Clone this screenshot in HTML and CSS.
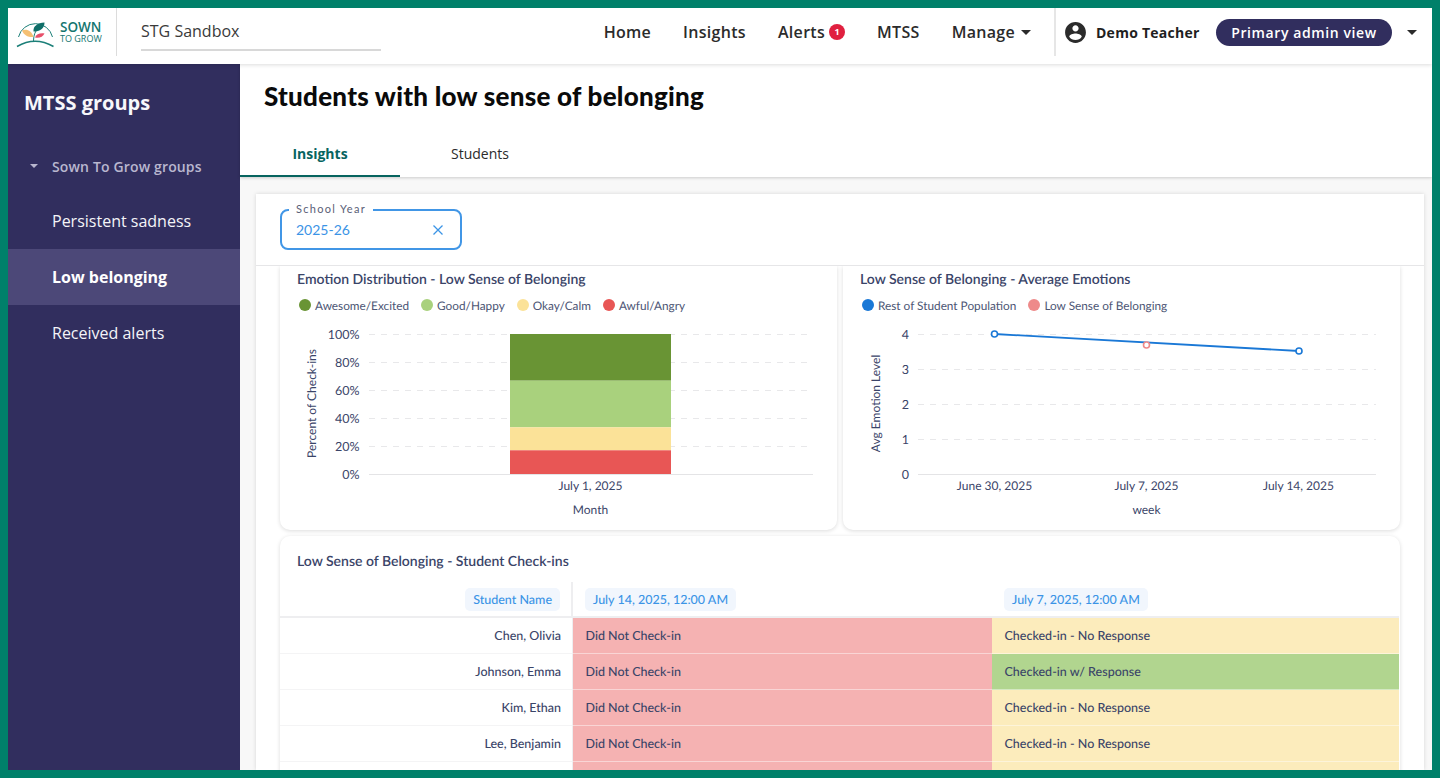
FILE: index.html
```html
<!DOCTYPE html>
<html lang="en">
<head>
<meta charset="utf-8">
<title>Students with low sense of belonging</title>
<link rel="stylesheet" href="styles.css">
</head>
<body>
<div class="frame">
  <header class="topbar">
    <div class="brand">
      <svg class="brand-mark" width="40" height="32" viewBox="0 0 40 32" aria-hidden="true">
        <path d="M2.500 21A17.500 17.500 0 0 1 36.500 21" fill="none" stroke="#1b7f78" stroke-width="1"/>
        <path d="M1 30.500Q19 20 37.500 30.500" fill="none" stroke="#1b7f78" stroke-width="1.500"/>
        <path d="M17.500 26C17.500 22 18 18 20 15" fill="none" stroke="#1b7f78" stroke-width="1"/>
        <path d="M17.500 15.500C17 10 21.500 7 28.500 6.500C28.500 12 24 16 17.500 15.500Z" fill="#0e6e68"/>
        <path d="M6 14.500C10.500 12.500 15.500 14.500 17.500 21C12.500 21.500 8 19.500 6 14.500Z" fill="#f5c073"/>
        <path d="M19 21.500C20.500 18 24 16.800 28.500 17.500C27 21 23 22.500 19 21.500Z" fill="#e8506a"/>
      </svg>
      <div class="brand-text">
        <span class="brand-top">SOWN</span>
        <span class="brand-bottom">TO GROW</span>
      </div>
    </div>
    <div class="sandbox">STG Sandbox</div>
    <nav class="nav">
      <a class="nav-item">Home</a>
      <a class="nav-item">Insights</a>
      <a class="nav-item">Alerts<span class="badge">1</span></a>
      <a class="nav-item">MTSS</a>
      <a class="nav-item">Manage<span class="caret caret-nav"></span></a>
    </nav>
    <div class="account">
      <svg class="avatar" width="25" height="25" viewBox="0 0 24 24" aria-hidden="true"><path fill="#2b2b2b" d="M12 2C6.480 2 2 6.480 2 12s4.480 10 10 10 10-4.480 10-10S17.520 2 12 2zm0 3c1.660 0 3 1.340 3 3s-1.340 3-3 3-3-1.340-3-3 1.340-3 3-3zm0 14.200c-2.500 0-4.710-1.280-6-3.220.030-1.990 4-3.080 6-3.080 1.990 0 5.970 1.090 6 3.080-1.290 1.940-3.500 3.220-6 3.220z"/></svg>
      <span class="account-name">Demo Teacher</span>
      <span class="role-pill">Primary admin view</span>
      <span class="caret caret-account"></span>
    </div>
  </header>

  <div class="body-row">
    <aside class="sidebar">
      <h2 class="side-title">MTSS groups</h2>
      <div class="side-group"><span class="caret caret-side"></span>Sown To Grow groups</div>
      <a class="side-item">Persistent sadness</a>
      <a class="side-item side-item-active">Low belonging</a>
      <a class="side-item">Received alerts</a>
    </aside>

    <main class="main">
      <div class="page-head">
        <h1 class="page-title">Students with low sense of belonging</h1>
        <div class="tabs">
          <a class="tab tab-active">Insights</a>
          <a class="tab">Students</a>
        </div>
      </div>

      <div class="content">
        <section class="panel">
          <div class="filters">
            <div class="field">
              <span class="field-label">School Year</span>
              <span class="field-value">2025-26</span>
              <svg width="12" height="12" viewBox="0 0 12 12" aria-hidden="true"><path d="M1.500 1.500l9 9M10.500 1.500l-9 9" stroke="#3b94e6" stroke-width="1.300" fill="none"/></svg>
            </div>
          </div>
          <div class="panel-body">
            <div class="chart-row">
              <article class="card chart-card">
                <h3 class="card-title">Emotion Distribution - Low Sense of Belonging</h3>
                <div class="legend">
                  <span class="legend-item"><i class="dot dot-awesome"></i>Awesome/Excited</span>
                  <span class="legend-item"><i class="dot dot-good"></i>Good/Happy</span>
                  <span class="legend-item"><i class="dot dot-okay"></i>Okay/Calm</span>
                  <span class="legend-item"><i class="dot dot-awful"></i>Awful/Angry</span>
                </div>
                <svg class="chart" width="557" height="200" viewBox="280 320 557 200">
                  <g class="grid">
                    <line x1="369" x2="813" y1="334.500" y2="334.500"/>
                    <line x1="369" x2="813" y1="362.500" y2="362.500"/>
                    <line x1="369" x2="813" y1="390.500" y2="390.500"/>
                    <line x1="369" x2="813" y1="418.500" y2="418.500"/>
                    <line x1="369" x2="813" y1="446.500" y2="446.500"/>
                  </g>
                  <line class="axis" x1="369" x2="813" y1="474.500" y2="474.500"/>
                  <rect x="510" y="334" width="161" height="46.700" fill="#699434"/>
                  <rect x="510" y="380.700" width="161" height="46.600" fill="#a9d17d"/>
                  <rect x="510" y="427.300" width="161" height="23" fill="#fbe298"/>
                  <rect x="510" y="450.300" width="161" height="23.700" fill="#e85655"/>
                  <g class="tick tick-y">
                    <text x="359.500" y="339">100%</text>
                    <text x="359.500" y="367">80%</text>
                    <text x="359.500" y="395">60%</text>
                    <text x="359.500" y="423">40%</text>
                    <text x="359.500" y="451">20%</text>
                    <text x="359.500" y="479">0%</text>
                  </g>
                  <text class="tick tick-x" x="590.500" y="489.500">July 1, 2025</text>
                  <text class="tick tick-x" x="590.500" y="513.500">Month</text>
                  <text class="tick tick-x" transform="translate(315.500 403.500) rotate(-90)">Percent of Check-ins</text>
                </svg>
              </article>

              <article class="card chart-card">
                <h3 class="card-title">Low Sense of Belonging - Average Emotions</h3>
                <div class="legend">
                  <span class="legend-item"><i class="dot dot-rest"></i>Rest of Student Population</span>
                  <span class="legend-item"><i class="dot dot-low"></i>Low Sense of Belonging</span>
                </div>
                <svg class="chart" width="557" height="200" viewBox="843 320 557 200">
                  <g class="grid">
                    <line x1="918" x2="1376" y1="334.500" y2="334.500"/>
                    <line x1="918" x2="1376" y1="369.500" y2="369.500"/>
                    <line x1="918" x2="1376" y1="404.500" y2="404.500"/>
                    <line x1="918" x2="1376" y1="439.500" y2="439.500"/>
                  </g>
                  <line class="axis" x1="918" x2="1376" y1="474.500" y2="474.500"/>
                  <polyline points="994.500,334 1299,351" fill="none" stroke="#1a78d6" stroke-width="1.800"/>
                  <circle cx="994.500" cy="334" r="3" fill="#fff" stroke="#1a78d6" stroke-width="1.600"/>
                  <circle cx="1146.500" cy="345" r="3" fill="#fff" stroke="#ee8a8a" stroke-width="1.600"/>
                  <circle cx="1299" cy="351" r="3" fill="#fff" stroke="#1a78d6" stroke-width="1.600"/>
                  <g class="tick tick-y">
                    <text x="909" y="339">4</text>
                    <text x="909" y="374">3</text>
                    <text x="909" y="409">2</text>
                    <text x="909" y="444">1</text>
                    <text x="909" y="479">0</text>
                  </g>
                  <text class="tick tick-x" x="994.500" y="489.500">June 30, 2025</text>
                  <text class="tick tick-x" x="1146.500" y="489.500">July 7, 2025</text>
                  <text class="tick tick-x" x="1298.500" y="489.500">July 14, 2025</text>
                  <text class="tick tick-x" x="1146.500" y="513.500">week</text>
                  <text class="tick tick-x" transform="translate(879.500 403.500) rotate(-90)">Avg Emotion Level</text>
                </svg>
              </article>
            </div>

            <article class="card table-card">
              <h3 class="table-title">Low Sense of Belonging - Student Check-ins</h3>
              <div class="table">
                <div class="th th-name"><span class="chip">Student Name</span></div>
                <div class="th"><span class="chip">July 14, 2025, 12:00 AM</span></div>
                <div class="th"><span class="chip">July 7, 2025, 12:00 AM</span></div>

                <div class="td td-name">Chen, Olivia</div>
                <div class="td st-none">Did Not Check-in</div>
                <div class="td st-partial">Checked-in - No Response</div>

                <div class="td td-name">Johnson, Emma</div>
                <div class="td st-none">Did Not Check-in</div>
                <div class="td st-full">Checked-in w/ Response</div>

                <div class="td td-name">Kim, Ethan</div>
                <div class="td st-none">Did Not Check-in</div>
                <div class="td st-partial">Checked-in - No Response</div>

                <div class="td td-name">Lee, Benjamin</div>
                <div class="td st-none">Did Not Check-in</div>
                <div class="td st-partial">Checked-in - No Response</div>

                <div class="td td-name"></div>
                <div class="td st-none"></div>
                <div class="td st-partial"></div>
              </div>
            </article>
          </div>
        </section>
      </div>
    </main>
  </div>
</div>
</body>
</html>
```
FILE: styles.css
```css
* { box-sizing: border-box; }
html, body { margin: 0; height: 100%; }
body {
  height: 778px;
  overflow: hidden;
  padding: 8px;
  background: #00806a;
  font-family: "Open Sans", "Liberation Sans", sans-serif;
  color: #2b2b2b;
}
h1, h2, h3 { margin: 0; }

.frame {
  height: 762px;
  display: flex;
  flex-direction: column;
  overflow: hidden;
  background: #fff;
}

/* Top bar */
.topbar {
  flex: 0 0 56px;
  display: flex;
  align-items: flex-start;
  background: #fff;
  box-shadow: 0 1px 4px rgba(0,0,0,.14);
  position: relative;
  z-index: 2;
}
.brand {
  width: 109px;
  height: 48px;
  flex: none;
  display: flex;
  align-items: center;
  gap: 4px;
  padding-left: 8px;
  border-right: 1px solid #dcdcdc;
}
.brand-mark { flex: none; }
.brand-text { display: flex; flex-direction: column; color: #14756f; }
.brand-top { font-size: 13.500px; font-weight: 600; line-height: 13px; }
.brand-bottom { font-size: 9px; line-height: 10px; }
.sandbox {
  width: 240px;
  height: 43px;
  margin-left: 24px;
  padding-top: 10px;
  flex: none;
  font-size: 16px;
  line-height: 26px;
  color: #3a3a3a;
  border-bottom: 2px solid #d8d8d8;
}
.nav {
  margin-left: auto;
  height: 48px;
  display: flex;
  align-items: center;
  gap: 32px;
  padding-right: 23px;
}
.nav-item {
  display: flex;
  align-items: center;
  font-size: 16px;
  font-weight: 600;
  letter-spacing: .3px;
  color: #2b2b2b;
}
.badge {
  width: 16px;
  height: 16px;
  margin-left: 4px;
  border-radius: 50%;
  background: #e0203f;
  color: #fff;
  font-size: 9px;
  font-weight: 700;
  line-height: 16px;
  text-align: center;
  letter-spacing: 0;
}
.caret {
  display: inline-block;
  width: 0;
  height: 0;
  border-left: 5px solid transparent;
  border-right: 5px solid transparent;
  border-top: 5px solid #2b2b2b;
}
.caret-nav { margin-left: 6px; }
.account {
  height: 48px;
  width: 378px;
  flex: none;
  display: flex;
  align-items: center;
  border-left: 2px solid #e6e6e6;
  padding-left: 7px;
}
.account-name { margin-left: 8px; width: 103px; white-space: nowrap; font-size: 14px; font-weight: 700; color: #1f1f1f; letter-spacing: .25px; }
.role-pill {
  margin-left: 17px;
  width: 176px;
  height: 27px;
  flex: none;
  border-radius: 14px;
  background: #312e5e;
  color: #fff;
  font-size: 14px;
  font-weight: 600;
  line-height: 27px;
  text-align: center;
  letter-spacing: .6px;
}
.caret-account { margin-left: 15px; }

/* Body */
.body-row { flex: 1; min-height: 0; display: flex; }
.sidebar {
  flex: 0 0 232px;
  background: #312e5e;
  color: #fff;
}
.side-title {
  padding: 25px 16px 0;
  font-size: 20px;
  font-weight: 700;
  line-height: 27px;
  color: #f7f7fb;
}
.side-group {
  display: flex;
  align-items: center;
  margin-top: 39px;
  padding-left: 22px;
  height: 22px;
  font-size: 14px;
  font-weight: 600;
  letter-spacing: .15px;
  color: #b9b7cf;
}
.caret-side {
  margin-right: 14px;
  border-left-width: 4px;
  border-right-width: 4px;
  border-top: 4px solid #b9b7cf;
}
.side-item {
  display: block;
  height: 56px;
  padding-left: 44px;
  font-size: 16px;
  line-height: 56px;
  color: #f4f4f8;
}
.side-group + .side-item { margin-top: 16px; }
.side-item-active { background: #4c4878; font-weight: 700; color: #fff; }

.main { flex: 1; min-width: 0; display: flex; flex-direction: column; background: #f8f8f8; }
.page-head {
  flex: none;
  height: 113px;
  background: #fff;
  display: flex;
  flex-direction: column;
  box-shadow: 0 1px 3px rgba(0,0,0,.18);
  position: relative;
  z-index: 1;
}
.page-title {
  padding: 15px 0 0 24px;
  height: 66px;
  font-family: "Lato", "Liberation Sans", sans-serif;
  font-size: 26px;
  font-weight: 900;
  line-height: 34px;
  color: #0a0a0a;
  letter-spacing: .25px;
}
.tabs { display: flex; height: 47px; }
.tab {
  width: 160px;
  height: 47px;
  text-align: center;
  font-size: 14px;
  line-height: 47px;
  color: #2b2b2b;
}
.tab-active {
  font-weight: 700;
  color: #07645f;
  border-bottom: 2px solid #07645f;
}

.content { flex: 1; min-height: 0; padding: 17px 8px 0 16px; font-family: "Lato", "Liberation Sans", sans-serif; }
.panel {
  height: 100%;
  background: #fff;
  box-shadow: 0 0 4px rgba(0,0,0,.14);
  display: flex;
  flex-direction: column;
  overflow: hidden;
}
.filters {
  flex: none;
  height: 72px;
  padding: 15px 0 0 24px;
  border-bottom: 1px solid #e6e6e8;
}
.field {
  position: relative;
  width: 182px;
  height: 41px;
  padding: 0 16px 0 14px;
  border: 2px solid #4196e6;
  border-radius: 8px;
  display: flex;
  align-items: center;
  justify-content: space-between;
}
.field-label {
  position: absolute;
  left: 7px;
  top: -9px;
  padding: 0 7px;
  background: #fff;
  font-size: 11px;
  line-height: 14px;
  letter-spacing: 1.300px;
  color: #5a6076;
}
.field-value { font-size: 14px; color: #3b94e6; }

.panel-body { flex: 1; min-height: 0; padding: 0 24px; overflow: hidden; text-rendering: geometricPrecision; }
.chart-row { display: grid; grid-template-columns: 557px 557px; gap: 6px; }
.card { background: #fff; box-shadow: 0 1px 4px rgba(0,0,0,.14); }
.chart-card {
  height: 264px;
  border-radius: 0 0 10px 10px;
}
.card-title {
  padding: 4px 0 0 17px;
  height: 25px;
  font-size: 14px;
  font-weight: 600;
  line-height: 18px;
  color: #3a4468;
}
.legend {
  height: 28px;
  padding-left: 19px;
  display: flex;
  align-items: center;
  gap: 12px;
  font-size: 11.800px;
  color: #4d5675;
}
.legend-item { display: flex; align-items: center; gap: 4px; }
.dot { width: 12px; height: 12px; border-radius: 50%; }
.dot-awesome { background: #699434; }
.dot-good { background: #a9d17d; }
.dot-okay { background: #fbe298; }
.dot-awful { background: #e85655; }
.dot-rest { background: #1a78d6; }
.dot-low { background: #ee8a8a; }
.chart { display: block; margin-top: 1px; }
.grid line { stroke: #e8e8ea; stroke-width: 1; stroke-dasharray: 6 6; }
.axis { stroke: #e4e4e6; stroke-width: 1; }
.tick { font-family: "Lato", "Liberation Sans", sans-serif; font-size: 12px; fill: #3a4468; }
.tick-y { text-anchor: end; font-size: 12.500px; }
.tick-x { text-anchor: middle; }

.table-card {
  margin-top: 6px;
  border-radius: 10px 10px 0 0;
}
.table-title {
  padding: 16px 0 0 17px;
  height: 46px;
  font-size: 14px;
  font-weight: 600;
  line-height: 18px;
  color: #3a4468;
}
.table {
  display: grid;
  grid-template-columns: 293px 419px 407px;
  grid-auto-rows: 36px;
  font-size: 12.500px;
  font-weight: 500;
  color: #3a4468;
}
.th {
  display: flex;
  align-items: center;
  padding-left: 12px;
  border-bottom: 2px solid #eeeef0;
}
.th-name {
  justify-content: flex-end;
  padding: 0 11px 0 0;
  border-right: 2px solid #eeeef0;
}
.chip {
  padding: 0 8px;
  height: 23px;
  line-height: 23px;
  border-radius: 5px;
  background: #f1f6fd;
  color: #3b94e6;
}
.td {
  padding-left: 12.500px;
  line-height: 35px;
  border-bottom: 1px solid rgba(255,255,255,.45);
}
.td-name {
  padding: 0 11px 0 0;
  text-align: right;
  border-bottom: 1px solid #f4f4f5;
  border-right: 1px solid #eeeef0;
}
.st-none { background: #f5b2b2; }
.st-partial { background: #fcecbc; }
.st-full { background: #b1d58f; }
```
